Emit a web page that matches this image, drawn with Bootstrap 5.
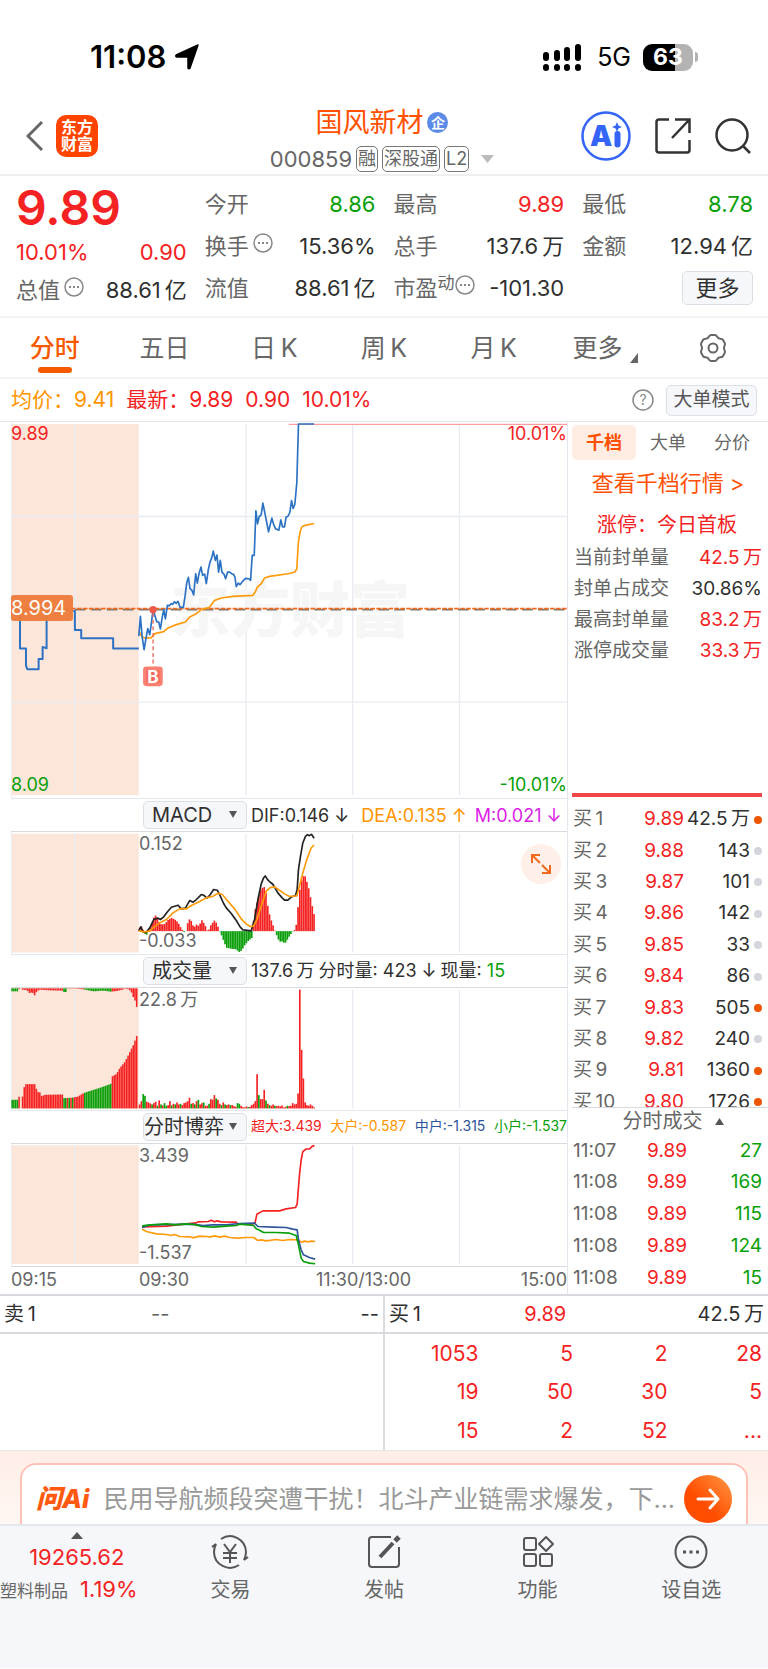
<!DOCTYPE html>
<html lang="zh-CN">
<head>
<meta charset="utf-8">
<meta name="viewport" content="width=device-width, initial-scale=1">
<title>国风新材 000859</title>
<link href="https://cdn.jsdelivr.net/npm/bootstrap@5.3.0/dist/css/bootstrap.min.css" rel="stylesheet">
<style>
:root{--up:#f42222;--down:#0a9f0a;--brand:#f55a00;--avg:#ff9500;--ink:#303030;--dim:#666;--rule:#e3e6ec}
body{font-family:Inter,"Noto Sans CJK SC",sans-serif;color:var(--ink);background:#fff;font-size:20px;line-height:1.2}
svg{display:block}
a,a:hover{color:inherit;text-decoration:none}
.up{color:var(--up)}.down{color:var(--down)}.dim{color:var(--dim)}.brand{color:var(--brand)}.avg{color:var(--avg)}
.plain-btn{border:0;background:none;padding:0;color:inherit}
.status-bar{height:95px;padding:19px 70px 0 90px;color:#000}
.clock{font-size:31px;font-weight:600}
.net{font-size:25px}
.battery{width:50px;height:27px;border-radius:9px;background:linear-gradient(90deg,#000 63%,#b3b3b3 63%);color:#fff;font-size:23px;font-weight:700;line-height:27px}
.battery-nub{width:3px;height:10px;border-radius:0 3px 3px 0;background:#b3b3b3;margin-left:2px}
.title-bar{display:grid;grid-template-columns:1fr auto 1fr;height:81px;padding:3px 17px 0;border-bottom:2px solid #efefef}
.back{margin:0 12px 0 9px}
.app-mark{width:42px;height:42px;border-radius:10px;background:#ff4400;color:#fff;font-size:16px;line-height:17px;font-weight:700}
.title-block{padding:6px 4px 0 0}
.stock-name{font-size:27px;line-height:34px;color:#ff5000;margin:0;font-weight:400}
.corp{width:21px;height:21px;border-radius:50%;background:#5b8be6;color:#fff;font-size:14px;line-height:21px;font-weight:700}
.stock-code{font-size:22px;color:var(--dim);gap:4px;margin-top:6px}
.tag{border:1px solid #777;border-radius:5px;font-size:18px;line-height:24px;padding:0 1px;color:var(--dim)}
.quote{display:grid;grid-template-columns:repeat(4,1fr);column-gap:18px;padding:7px 15px 7px 16px;border-bottom:2px solid #f4f4f6;font-size:22px}
.quote-row{height:42px;display:flex;align-items:center;justify-content:space-between;white-space:nowrap}
.quote-main .r1{height:50px;font-size:48px;font-weight:600}
.quote-main .r2{height:38px}
.quote-main .r3{height:38px}
.soft-btn{border:1px solid #dcdfe6;background:#f6f7fa;border-radius:5px;color:var(--ink)}
.more-btn{width:71px;height:34px;padding:0;font-size:22px}
.mode-btn{width:91px;height:31px;padding:0;font-size:19px;color:#555}
.pe-note{font-size:17px;line-height:1}
.period-tabs{display:grid;grid-template-columns:repeat(7,1fr);height:61px;border-bottom:2px solid #f4f4f6;font-size:25px;color:var(--dim)}
.period-tabs .on{color:var(--brand);font-weight:500;position:relative}
.period-tabs .on::after{content:"";position:absolute;bottom:4px;left:50%;width:34px;margin-left:-17px;height:6px;border-radius:3px;background:var(--brand)}
.legend-row{height:42px;padding:0 11px;font-size:21px;gap:12px}
.market{border-top:1px solid var(--rule)}
.charts{padding-left:11px;border-right:1px solid var(--rule)}
.side{flex:0 0 200px;padding-left:4px}
.plot{position:relative}
.plot>svg{width:100%;height:auto}
.lab{position:absolute;font-size:18px;line-height:18px}
.lab-open{left:128px}
.lab-top{top:3px}
.lab-bottom{bottom:4px}
.price-tag{position:absolute;left:0;top:46%;height:26px;line-height:26px;width:62px;border-radius:3px;background:#ee7c3a;color:#fff;opacity:.95;font-size:20px}
.expand{position:absolute;right:6px;top:12px;width:40px;height:40px;border-radius:50%;background:#fef0e8}
.ind-row{height:34px;border-top:1px solid var(--rule);border-bottom:1px solid #d8dae0;padding-left:132px;font-size:18px;white-space:nowrap}
.ind-select{flex:0 0 104px;height:28px;appearance:none;font-size:20px;padding:0 0 0 8px;margin-right:4px;background:#f6f7fa url("data:image/svg+xml,%3Csvg xmlns='http://www.w3.org/2000/svg' width='8' height='8'%3E%3Cpath d='M0 0h8L4 7z' fill='%23555'/%3E%3C/svg%3E") no-repeat right 9px center}
.ind-select.flush{padding-left:0}
.tiny{font-size:14px}
.axis{height:27px;border-top:1px solid #d8dae0;font-size:18px;color:var(--dim);display:grid;grid-template-columns:128px 177px 1fr auto;align-items:center}
.book-tabs{display:grid;grid-template-columns:64px 64px 64px;font-size:18px;line-height:35px;padding-top:3px;color:var(--dim)}
.book-tabs .on{background:#ffede3;border-radius:5px;color:#ff5000;font-weight:600}
.book-more{font-size:22px;line-height:30px;color:#ff5000}
.seal-title{line-height:32px;padding:11px 6px 0 0;margin-bottom:2px}
.seal{margin-left:2px;width:188px}
.seal td,.seal th{height:31px;font-size:19px;font-weight:400;padding:0;white-space:nowrap}
.book-rule{height:4px;background:#f04848;margin:126px 6px 7px 0}
.book-clip{height:304px;overflow:hidden;border-bottom:1px solid #d8dae0}
.book{width:190px;height:314px;font-size:19px;margin-left:1px}
.book td,.book th,.ticks td,.ticks th{padding:0;font-weight:400;white-space:nowrap}
.vol-col{width:66px}.dot-col{width:13px}.qty-col{width:75px}
.dot{width:8px;height:8px;border-radius:50%;background:#d3d6dd;margin-left:4px}
.dot.hot{background:#ee5500}
.ticks-head{line-height:27px;padding-left:6px}
.ticks{width:189px;height:159px;font-size:19px;margin-left:1px}
.ladder{border-top:2px solid #d8dae0}
.ladder .top-row{display:grid;grid-template-columns:2fr 1fr 3fr;align-items:center;height:38px;border-bottom:2px solid #d8dae0;padding:0 4px}
.ladder .half{flex:1 1 0}
.ladder .half+.half{border-left:2px solid #d8dae0}
.queue{width:calc(100% - 5px);table-layout:fixed;height:116px;font-size:21px}
.queue td{padding:0 1px 0 0;text-align:right}
.ask{border-top:1px solid #e3e6ec;background:linear-gradient(#ffede6,#fff7f3);padding:12px 20px 0;height:74px;overflow:hidden}
.ask-box{height:84px;padding:0 14px 14px;border:2px solid #ffc2b8;border-bottom:0;border-radius:16px;background:#fff;font-size:25px;color:#999}
.ask-logo{font-size:26px;font-weight:800;font-style:italic;color:#ff5a10}
.ask-text{margin:0 8px 0 14px}
.go{width:48px;height:48px;border-radius:50%;background:linear-gradient(45deg,#ff4d00 40%,#ff9a45)}
.dock{display:grid;grid-template-columns:repeat(5,1fr);border-top:2px solid #e3e6ec;background:#f6f7fa;min-height:144px;color:var(--dim);padding-top:6px}
.dock a{height:70px;justify-content:space-between}
.index-num{font-size:22px}.index-name{font-size:17px}
</style>
</head>
<body>
<header>
  <div class="status-bar d-flex align-items-center justify-content-between">
    <div class="d-flex align-items-center gap-2"><span class="clock">11:08</span>
      <svg width="26" height="26" viewBox="0 0 26 26"><path d="M24 1 16 24q-1 1.500-2 0V13H3q-2-.8-.8-2z" fill="#000" stroke="#000" stroke-width="1.500" stroke-linejoin="round"/></svg></div>
    <div class="d-flex align-items-center">
      <svg width="38" height="27" viewBox="0 0 38 27"><g stroke="#000" stroke-width="6" stroke-linecap="round"><path d="M3 11v3M14 9v5M24 6v8M35 3v11M3 23v1M14 23v1M24 23v1M35 23v1"/></g></svg>
      <span class="net ms-3 me-2">5G</span>
      <span class="battery ms-1 text-center">63</span><span class="battery-nub"></span>
    </div>
  </div>
  <div class="title-bar align-items-center">
    <div class="d-flex align-items-center">
      <button class="plain-btn back" aria-label="返回"><svg width="18" height="32" viewBox="0 0 18 32"><path d="M16 2 2 16l14 14" fill="none" stroke="#666" stroke-width="3"/></svg></button>
      <div class="app-mark d-flex align-items-center text-center justify-content-center">东方<br>财富</div>
    </div>
    <div class="title-block d-flex flex-column align-items-center">
      <div class="d-flex align-items-center gap-1"><h1 class="stock-name">国风新材</h1><span class="corp text-center">企</span></div>
      <div class="d-flex align-items-center stock-code"><span>000859</span><span class="tag">融</span><span class="tag">深股通</span><span class="tag">L2</span>
        <svg class="ms-2" width="13" height="8" viewBox="0 0 13 8"><path d="M0 0h13L6.500 8z" fill="#bbb"/></svg></div>
    </div>
    <div class="d-flex align-items-center justify-content-end gap-4">
      <button class="plain-btn" aria-label="AI"><svg width="50" height="50" viewBox="0 0 50 50"><circle cx="25" cy="25" r="23.500" fill="none" stroke="#3565f6" stroke-width="2.500"/><text x="9" y="35" font-size="28" font-weight="900" fill="#3565f6">A</text><path d="M36.500 23v10.500" stroke="#3565f6" stroke-width="6" stroke-linecap="round"/><path d="m36 11 1.500 3.500L41 16l-3.500 1.500L36 21l-1.500-3.500L31 16l3.500-1.500z" fill="#3565f6"/></svg></button>
      <button class="plain-btn" aria-label="分享"><svg width="36" height="36" viewBox="0 0 36 36" fill="none" stroke="#333" stroke-width="2.500"><path d="M14 1.500H4q-2.500 0-2.500 2.500v28q0 2.500 2.500 2.500h28q2.500 0 2.500-2.500V22M20 1.500h14.500V15M34 2 17 20"/></svg></button>
      <button class="plain-btn" aria-label="搜索"><svg width="36" height="38" viewBox="0 0 36 38" fill="none" stroke="#333" stroke-width="2.500"><circle cx="17" cy="18" r="15.500"/><path d="m28 29 7 7"/></svg></button>
    </div>
  </div>
</header>
<main>
  <section class="quote">
    <div class="quote-main">
      <div class="quote-row r1 up">9.89</div>
      <div class="quote-row r2 up"><span>10.01%</span><span>0.90</span></div>
      <div class="quote-row r3"><span class="dim d-flex gap-1">总值<svg width="20" height="20" viewBox="0 0 20 20"><circle cx="10" cy="10" r="9" fill="none" stroke="#888" stroke-width="1.500"/><path d="M5 10h2M9 10h2M13 10h2" stroke="#888" stroke-width="2"/></svg></span><span>88.61&thinsp;亿</span></div>
    </div>
    <div>
      <div class="quote-row"><span class="dim">今开</span><span class="down">8.86</span></div>
      <div class="quote-row"><span class="dim d-flex gap-1">换手<svg width="20" height="20" viewBox="0 0 20 20"><circle cx="10" cy="10" r="9" fill="none" stroke="#888" stroke-width="1.500"/><path d="M5 10h2M9 10h2M13 10h2" stroke="#888" stroke-width="2"/></svg></span><span>15.36%</span></div>
      <div class="quote-row"><span class="dim">流值</span><span>88.61&thinsp;亿</span></div>
    </div>
    <div>
      <div class="quote-row"><span class="dim">最高</span><span class="up">9.89</span></div>
      <div class="quote-row"><span class="dim">总手</span><span>137.6&thinsp;万</span></div>
      <div class="quote-row"><span class="dim d-flex">市盈<small class="pe-note">动</small><svg width="20" height="20" viewBox="0 0 20 20"><circle cx="10" cy="10" r="9" fill="none" stroke="#888" stroke-width="1.500"/><path d="M5 10h2M9 10h2M13 10h2" stroke="#888" stroke-width="2"/></svg></span><span>-101.30</span></div>
    </div>
    <div>
      <div class="quote-row"><span class="dim">最低</span><span class="down">8.78</span></div>
      <div class="quote-row"><span class="dim">金额</span><span>12.94&thinsp;亿</span></div>
      <div class="quote-row justify-content-end"><button class="soft-btn more-btn">更多</button></div>
    </div>
  </section>
  <nav class="period-tabs text-center align-items-center">
    <a href="#" class="on h-100 d-flex align-items-center justify-content-center">分时</a><a href="#">五日</a><a href="#">日&thinsp;K</a><a href="#">周&thinsp;K</a><a href="#">月&thinsp;K</a>
    <a href="#" class="d-flex justify-content-center align-items-end ps-1">更多<svg class="ms-2" width="8" height="10" viewBox="0 0 8 10"><path d="M8 0v10H0z" fill="#666"/></svg></a>
    <a href="#" aria-label="设置" class="d-flex justify-content-center"><svg width="30" height="30" viewBox="0 0 30 30" fill="none" stroke="#666" stroke-width="2"><path d="M11 3.500q.8-1.500 2.300-1.500h3.400q1.500 0 2.300 1.500 1 2 3.300 2.200 2 .1 2.700 1.200l1.700 3q.8 1.300-.1 2.600-1.300 2.500 0 5 .9 1.300.1 2.600l-1.700 3q-.7 1.100-2.700 1.200-2.300.2-3.300 2.200-.8 1.500-2.300 1.500h-3.400q-1.500 0-2.300-1.500-1-2-3.300-2.200-2-.1-2.700-1.200l-1.700-3q-.8-1.300.1-2.600 1.300-2.500 0-5-.9-1.300-.1-2.600l1.700-3q.7-1.100 2.700-1.200 2.300-.2 3.300-2.200z"/><circle cx="15" cy="15" r="4.500"/></svg></a>
  </nav>
  <div class="legend-row d-flex align-items-center">
    <span class="avg">均价：9.41</span><span class="up">最新：9.89</span><span class="up">0.90</span><span class="up">10.01%</span>
    <svg class="ms-auto" width="22" height="22" viewBox="0 0 22 22"><circle cx="11" cy="11" r="10" fill="none" stroke="#888" stroke-width="1.500"/><text x="11" y="16" font-size="14" text-anchor="middle" fill="#888">?</text></svg>
    <button class="soft-btn mode-btn">大单模式</button>
  </div>

  <div class="market d-flex">
    <section class="charts flex-grow-1">
      <div class="plot">
        <svg viewBox="33 36 1671 1131" aria-label="分时走势">
          <path fill="#fce6da" d="M33 42h384v1116H33z"/>
          <path stroke="#e8ebf1" stroke-width="4" d="M225 42v1116M739 42v1116M1060 42v1116M1381 42v1116M33 320h1671M33 878h1671M34 36v1131"/>
          <text x="512" y="666" font-size="180" font-weight="900" fill="#f6f6f7">东方财富</text>
          <path stroke="#ff9c9c" stroke-width="4" d="M868 43h836"/>
          <path stroke="#777" stroke-width="5" stroke-dasharray="32 16" d="M33 600h1671"/>
          <path stroke="#f26a1b" stroke-width="5" stroke-dasharray="14 4" d="M33 597h1671"/>
          <g fill="none" stroke-linejoin="round">
            <path stroke="#ff9a0a" stroke-width="5" d="M417 665 427 682 438 686 455 684 465 672 492 666 505 655 530 645 557 637 570 622 590 612 605 600 628 594 645 572 665 565 700 560 760 557 768 545 772 534 785 522 795 505 810 500 866 492 886 487 892 478 894 440 897 395 903 362 908 350 920 346 944 341"/>
            <path stroke="#2b72c4" stroke-width="6" d="M60 600V717H78V768L82 779H116V748H128V712L140 716V600M220 604H225V661H244V686H340V717H417"/>
            <path stroke="#2b72c4" stroke-width="5" d="M417 680 422 620 427 680 433 720 438 690 444 657 450 675 455 640 460 600 466 620 471 636 477 637 482 658 488 620 492 600 497 628 503 587 509 588 515 582 519 584 524 576 529 581 535 575 541 593 551 593 556 560 561 520 566 503 571 537 577 542 582 556 588 492 593 520 598 492 604 472 609 497 615 493 620 522 626 480 631 457 636 445 641 424 647 452 652 436 657 487 662 452 667 487 673 493 678 507 684 487 690 487 696 492 702 494 706 502 710 531 716 520 721 525 728 516 738 506 748 507 753 512 758 437 764 437 769 303 774 342 779 320 785 315 790 280 796 310 801 335 807 366 812 345 817 325 822 343 828 357 838 361 844 330 849 351 855 351 860 321 865 320 871 308 876 272 881 296 886 284 892 218 897 42H944"/>
          </g>
          <path stroke="#f06a60" stroke-width="4" stroke-dasharray="12 8" d="M460 610v160"/>
          <circle cx="460" cy="600" r="11" fill="#ee5a4a"/>
          <rect x="430" y="771" width="59" height="59" rx="10" fill="#fa8072"/>
          <rect x="440" y="781" width="39" height="39" rx="4" fill="#f56a5c"/>
          <text x="460" y="819" font-size="52" font-weight="700" text-anchor="middle" fill="#fff">B</text>
        </svg>
        <span class="lab lab-top up start-0">9.89</span>
        <span class="lab lab-top up end-0">10.01%</span>
        <span class="lab lab-bottom down start-0">8.09</span>
        <span class="lab lab-bottom down end-0">-10.01%</span>
        <span class="price-tag">8.994</span>
      </div>
      <div class="ind-row d-flex align-items-center">
        <select class="ind-select soft-btn" aria-label="指标一"><option>MACD</option></select>
        <span>DIF:0.146 ↓</span><span class="avg ms-2 ps-1">DEA:0.135 ↑</span><span class="ms-2" style="color:#dc1ee6">M:0.021 ↓</span>
      </div>
      <div class="plot">
        <svg viewBox="33 127 1671 366" aria-label="MACD">
          <path fill="#fce6da" d="M33 132h384v357H33z"/>
          <path stroke="#e8ebf1" stroke-width="4" d="M225 132v357M739 132v357M1060 132v357M1381 132v357M34 127v366"/>
          <g id="macdBars"></g>
          <g fill="none" stroke-width="5" stroke-linejoin="round">
            <path stroke="#222" d="M417 424 423 412 430 427 438 430 450 415 462 390 475 386 482 390 492 382 502 368 515 353 535 347 545 358 557 356 570 333 580 338 590 330 605 315 612 317 622 326 632 315 642 300 653 302 660 315 672 342 680 355 695 372 710 393 722 413 730 421 755 424 765 390 775 330 785 283 792 265 797 259 804 270 812 278 820 284 835 310 848 325 855 332 865 332 876 322 888 318 893 300 897 240 903 200 910 160 918 140 924 135 930 138 936 134 944 146"/>
            <path stroke="#ff9a0a" d="M417 424 435 427 450 425 460 415 475 403 500 390 520 370 540 358 560 358 575 348 600 336 620 325 640 320 655 311 668 315 685 335 705 358 725 388 740 403 752 411 762 410 772 390 785 350 800 305 812 294 825 292 840 302 855 313 870 321 892 319 900 290 910 250 922 210 935 175 944 166"/>
          </g>
        </svg>
        <span class="lab lab-open lab-top dim">0.152</span>
        <span class="lab lab-open lab-bottom dim">-0.033</span>
        <button class="plain-btn expand d-flex align-items-center justify-content-center" aria-label="全屏"><svg width="20" height="20" viewBox="0 0 20 20" fill="none" stroke="#f26a1b" stroke-width="2"><path d="M1 9V1h8M1 1l8 8M19 11v8h-8M19 19l-8-8"/></svg></button>
      </div>
      <div class="ind-row d-flex align-items-center">
        <select class="ind-select soft-btn" aria-label="指标二"><option>成交量</option></select>
        <span>137.6&thinsp;万</span><span class="ms-1">分时量: 423 ↓</span><span class="ms-1">现量: <span class="down">15</span></span>
      </div>
      <div class="plot">
        <svg viewBox="33 596 1671 366" aria-label="成交量">
          <path fill="#fce6da" d="M33 597h384v361H33z"/>
          <path stroke="#e8ebf1" stroke-width="4" d="M225 601v357M739 601v357M1060 601v357M1381 601v357M34 596v366"/>
          <g id="volBars"></g>
        </svg>
        <span class="lab lab-open lab-top dim">22.8&thinsp;万</span>
      </div>
      <div class="ind-row d-flex align-items-center">
        <select class="ind-select soft-btn flush" aria-label="指标三"><option>分时博弈</option></select>
        <span class="tiny flex-grow-1 d-flex justify-content-between"><span class="up">超大:3.439</span><span class="avg">大户:-0.587</span><span style="color:#2d5599">中户:-1.315</span><span class="down">小户:-1.537</span></span>
      </div>
      <div class="plot">
        <svg viewBox="33 137 1671 366" aria-label="分时博弈">
          <path fill="#fce6da" d="M33 141h384v357H33z"/>
          <path stroke="#e8ebf1" stroke-width="4" d="M225 141v357M739 141v357M1060 141v357M1381 141v357M34 137v366"/>
          <g fill="none" stroke-width="5" stroke-linejoin="round">
            <path stroke="#f42222" d="M427 386 500 384 560 377 590 374 595 371 625 370 635 366 645 371 652 368 665 371 710 372 715 378 760 377 767 372 772 348 790 338 840 338 860 332 888 328 893 318 900 230 905 185 910 160 920 152 930 152 938 144 945 142"/>
            <path stroke="#ff9a0a" d="M427 393 440 400 470 407 500 409 515 412 525 409 540 415 570 416 580 419 600 414 620 415 632 416 645 413 660 417 675 414 690 418 715 420 740 418 762 418 775 427 785 425 800 428 830 424 850 427 870 424 895 425 905 432 915 429 925 431 935 429 947 430"/>
            <path stroke="#2d5599" d="M427 388 450 380 580 378 610 382 640 380 680 380 720 376 765 375 775 385 820 387 860 388 880 393 893 395 897 425 905 455 912 470 930 478 947 483"/>
            <path stroke="#0a9f0a" d="M427 383 445 381 500 377 525 380 560 377 590 380 605 385 640 387 680 384 710 382 720 378 745 380 762 382 770 392 780 396 792 403 830 403 870 405 890 412 897 440 905 480 912 490 930 495 947 497"/>
          </g>
        </svg>
        <span class="lab lab-open lab-top dim">3.439</span>
        <span class="lab lab-open lab-bottom dim">-1.537</span>
      </div>
      <div class="axis"><span>09:15</span><span>09:30</span><span>11:30/13:00</span><span>15:00</span></div>
    </section>

    <aside class="side">
      <nav class="book-tabs text-center"><a href="#" class="on">千档</a><a href="#">大单</a><a href="#">分价</a></nav>
      <a href="#" class="book-more d-block text-center pt-2 pe-1">查看千档行情 &gt;</a>
      <div class="seal-title text-center up">涨停：今日首板</div>
      <table class="seal">
        <tr><th class="dim">当前封单量</th><td class="up text-end">42.5&thinsp;万</td></tr>
        <tr><th class="dim">封单占成交</th><td class="text-end">30.86%</td></tr>
        <tr><th class="dim">最高封单量</th><td class="up text-end">83.2&thinsp;万</td></tr>
        <tr><th class="dim">涨停成交量</th><td class="up text-end">33.3&thinsp;万</td></tr>
      </table>
      <div class="book-rule"></div>
      <div class="book-clip"><table class="book" id="book"></table></div>
      <a href="#" class="ticks-head dim d-flex justify-content-center align-items-center gap-2">分时成交<svg class="ms-1" width="9" height="7" viewBox="0 0 9 7"><path d="M0 7h9L4.500 0z" fill="#555"/></svg></a>
      <table class="ticks" id="ticks"></table>
    </aside>
  </div>

  <section class="ladder d-flex">
    <div class="half">
      <div class="top-row"><span>卖&thinsp;1</span><span class="dim text-center">--</span><span class="text-end">--</span></div>
    </div>
    <div class="half">
      <div class="top-row"><span>买&thinsp;1</span><span class="up text-center">9.89</span><span class="text-end">42.5&thinsp;万</span></div>
      <table class="queue up">
        <tr><td>1053</td><td>5</td><td>2</td><td>28</td></tr>
        <tr><td>19</td><td>50</td><td>30</td><td>5</td></tr>
        <tr><td>15</td><td>2</td><td>52</td><td>...</td></tr>
      </table>
    </div>
  </section>
</main>
<div class="ask">
  <a href="#" class="ask-box d-flex align-items-center">
    <span class="ask-logo">问Ai</span><span class="ask-text text-truncate flex-grow-1">民用导航频段突遭干扰！北斗产业链需求爆发，下...</span>
    <span class="go flex-shrink-0 d-flex align-items-center justify-content-center"><svg width="24" height="22" viewBox="0 0 24 22" fill="none" stroke="#fff" stroke-width="3" stroke-linecap="round" stroke-linejoin="round"><path d="M2 11h20M14 2l8 9-8 9"/></svg></span>
  </a>
</div>
<footer class="dock text-center">
  <a href="#" class="d-flex flex-column align-items-center"><svg width="12" height="7" viewBox="0 0 12 7"><path d="M0 7h12L6 0z" fill="#555"/></svg><span class="up index-num">19265.62</span><span class="text-nowrap align-self-start"><span class="index-name">塑料制品</span><span class="up ms-2 ps-1 index-num">1.19%</span></span></a>
  <a href="#" class="d-flex flex-column align-items-center"><svg width="38" height="40" viewBox="0 0 38 40" fill="none" stroke="#555" stroke-width="2"><path d="M10 7a16 16 0 0 1 25 13q0 4-2 8l4-3M28 33A16 16 0 0 1 3 20q0-4 2-8l-4 3M13 12l6 8 6-8M19 20v11M12 21h14M12 26h14"/></svg><span>交易</span></a>
  <a href="#" class="d-flex flex-column align-items-center"><svg width="34" height="40" viewBox="0 0 34 40" fill="none" stroke="#555" stroke-width="2"><path d="M24 5H5q-3 0-3 3v24q0 3 3 3h24q3 0 3-3V15"/><path stroke-width="4" d="M13 25 26 11"/><path stroke-width="5" d="m28 9 4-4"/></svg><span>发帖</span></a>
  <a href="#" class="d-flex flex-column align-items-center"><svg width="32" height="40" viewBox="0 0 32 40" fill="none" stroke="#555" stroke-width="2"><rect x="2" y="6" width="12" height="12" rx="2"/><rect x="2" y="22" width="12" height="12" rx="2"/><rect x="18" y="22" width="12" height="12" rx="2"/><path stroke-linejoin="round" d="m24 5 7 7-7 7-7-7z"/></svg><span>功能</span></a>
  <a href="#" class="d-flex flex-column align-items-center"><svg width="34" height="40" viewBox="0 0 34 40" fill="none" stroke="#555" stroke-width="2"><circle cx="17" cy="20" r="15.500"/><path stroke-width="3" d="M9 20h3M15.500 20h3M22 20h3"/></svg><span>设自选</span></a>
</footer>
<script src="https://cdn.jsdelivr.net/npm/bootstrap@5.3.0/dist/js/bootstrap.bundle.min.js"></script>
<script>
const RED = '#f42222', GREEN = '#0a9f0a', STEP = 321 / 60;
const rect = (x, y, h, c, w = 5) => `<rect x="${x}" y="${y}" width="${w}" height="${h}" fill="${c}"/>`;
// linear interpolation through [x, value] pairs
function at(pts, x) {
  for (let i = 1; i < pts.length; i++) {
    const [x0, v0] = pts[i - 1], [x1, v1] = pts[i];
    if (x <= x1) return v0 + (v1 - v0) * (x - x0) / (x1 - x0);
  }
  return pts[pts.length - 1][1];
}
const macd = [[417,5],[422,18],[428,8],[433,-4],[438,-13],[443,-8],[448,3],[455,20],[460,38],[466,48],[472,42],[480,22],[487,20],[495,22],[505,34],[515,40],[528,33],[535,25],[541,14],[548,3],[553,-3],[558,0],[562,20],[568,36],[575,30],[582,10],[590,20],[597,15],[606,33],[615,20],[622,2],[628,5],[634,20],[644,32],[652,22],[657,4],[662,-5],[670,-25],[680,-50],[690,-52],[710,-55],[718,-63],[726,-58],[735,-42],[745,-30],[757,-20],[760,20],[765,60],[772,85],[780,120],[788,130],[793,134],[799,115],[805,70],[812,40],[820,18],[825,3],[830,-10],[836,-25],[842,-32],[850,-30],[854,-38],[860,-32],[866,-20],[872,-12],[877,-2],[887,5],[892,30],[898,110],[905,150],[914,172],[920,155],[927,130],[934,95],[940,65],[946,40]];
let s = '';
for (let i = 0; i < 99; i++) {
  const x = 417 + i * STEP, v = at(macd, x + 2);
  s += v >= 0 ? rect(x, 425 - v, v, RED) : rect(x, 425, -v, GREEN);
}
document.getElementById('macdBars').innerHTML = s;

// call auction volume: matched (bottom) and unmatched (top)
const auction = [[33,26],[52,26],[55,35],[68,36],[70,58],[76,73],[107,73],[110,50],[120,48],[125,36],[133,41],[188,42],[190,31],[215,32],[235,36],[248,45],[262,50],[300,62],[333,74],[335,95],[350,104],[360,122],[375,140],[390,170],[400,190],[412,222]];
const unmatched = [[33,9],[52,9],[55,2],[65,4],[80,5],[88,14],[97,12],[105,23],[110,8],[120,4],[150,6],[188,7],[190,11],[198,11],[201,1],[230,1],[250,3],[280,9],[310,7],[333,10],[350,8],[368,4],[374,1],[385,3],[393,8],[400,26],[405,36],[411,58]];
const greenAt = x => x < 53 || (x > 188 && x < 200) || (x > 248 && x < 333);
s = '';
for (let i = 0; i < 73; i++) {
  const x = 34 + i * 5.2;
  if (i === 5) continue;
  const mixed = x > 205 && x < 222 && i % 2;
  s += rect(x, 958 - at(auction, x + 2), at(auction, x + 2), greenAt(x) || mixed ? GREEN : RED, 4.7);
  s += rect(x, 597, at(unmatched, x + 2), greenAt(x) ? GREEN : RED, 4.7);
}
const vol = [12,22,43,38,20,18,15,12,16,20,8,24,12,9,16,8,10,22,9,14,12,18,12,14,10,16,18,22,32,14,16,12,22,26,12,16,18,8,8,14,28,26,40,30,26,14,10,18,12,10,12,10,10,7,5,16,14,8,4,3,6,4,5,10,14,22,103,40,28,28,56,24,14,10,8,12,8,7,8,6,9,3,5,8,7,8,16,12,14,45,357,176,90,18,10,8,12,8,3];
const volGreen = new Set([2,3,7,10,12,14,15,18,20,23,29,31,33,36,39,43,46,48,51,55,56,61,67,71,73,76,83]);
vol.forEach((h, i) => s += rect(417 + i * STEP, 958 - h, h, volGreen.has(i) ? GREEN : RED));
document.getElementById('volBars').innerHTML = s;

const bids = [['9.89','42.5\u2009万',1],['9.88','143'],['9.87','101'],['9.86','142'],['9.85','33'],['9.84','86'],['9.83','505',1],['9.82','240'],['9.81','1360',1],['9.80','1726',1]];
document.getElementById('book').innerHTML = bids.map(([p, q, hot], i) =>
  `<tr><th class="dim">买\u2009${i + 1}</th><td class="up text-end">${p}</td><td class="vol-col text-end">${q}</td><td class="dot-col"><div class="dot ${hot ? 'hot' : ''}"></div></td></tr>`).join('');
document.getElementById('ticks').innerHTML = [['11:07',27],['11:08',169],['11:08',115],['11:08',124],['11:08',15]].map(([t, q]) =>
  `<tr><th class="dim">${t}</th><td class="up text-end">9.89</td><td class="qty-col down text-end">${q}</td></tr>`).join('');
</script>
</body>
</html>
